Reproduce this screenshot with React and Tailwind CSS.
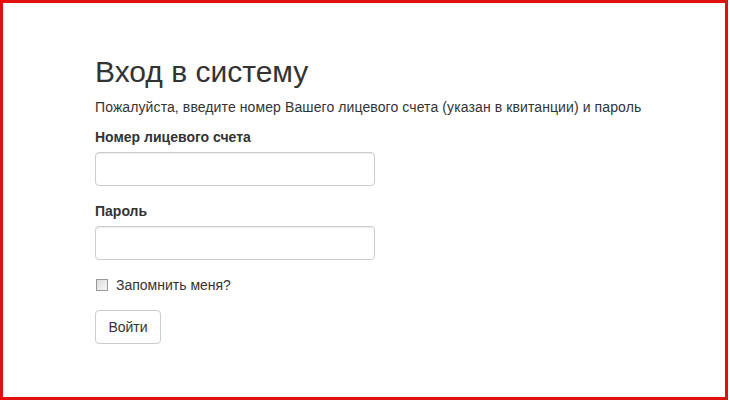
export default function App() {
  return (
    <div className="w-[730px] h-[400px] bg-white" style={{ fontFamily: '"Liberation Sans", Arial, sans-serif' }}>
      <div className="w-[728px] h-[400px] border-[3px] border-[#e01010] bg-white pl-[92px] pt-[50px] text-[#333]">
        <h1 className="text-[30px] leading-[40px] font-normal -mt-[1px] mb-[1px]">Вход в систему</h1>
        <p className="text-[14px] leading-[20px] mt-[5px] tracking-[0.1px]">
          Пожалуйста, введите номер Вашего лицевого счета (указан в квитанции) и пароль
        </p>
        <form className="mt-[10px]">
          <label className="block text-[14px] leading-[20px] font-bold">Номер лицевого счета</label>
          <input className="block mt-[5px] w-[280px] h-[34px] border border-[#ccc] rounded-[4px] shadow-[inset_0_1px_1px_rgba(0,0,0,0.075)] px-3" />
          <label className="block mt-[15px] text-[14px] leading-[20px] font-bold">Пароль</label>
          <input type="password" className="block mt-[5px] w-[280px] h-[34px] border border-[#ccc] rounded-[4px] shadow-[inset_0_1px_1px_rgba(0,0,0,0.075)] px-3" />
          <label className="flex items-center mt-[15px] text-[14px] leading-[20px]">
            <span className="w-[12px] h-[12px] border border-[#999] bg-gradient-to-br from-[#ddd] to-[#f6f6f6] ml-[1px]" />
            <span className="ml-[8px]">Запомнить меня?</span>
          </label>
          <button type="button" className="block mt-[15px] w-[66px] h-[34px] border border-[#ccc] rounded-[4px] bg-white text-[14px] text-[#333]">
            Войти
          </button>
        </form>
      </div>
    </div>
  );
}
